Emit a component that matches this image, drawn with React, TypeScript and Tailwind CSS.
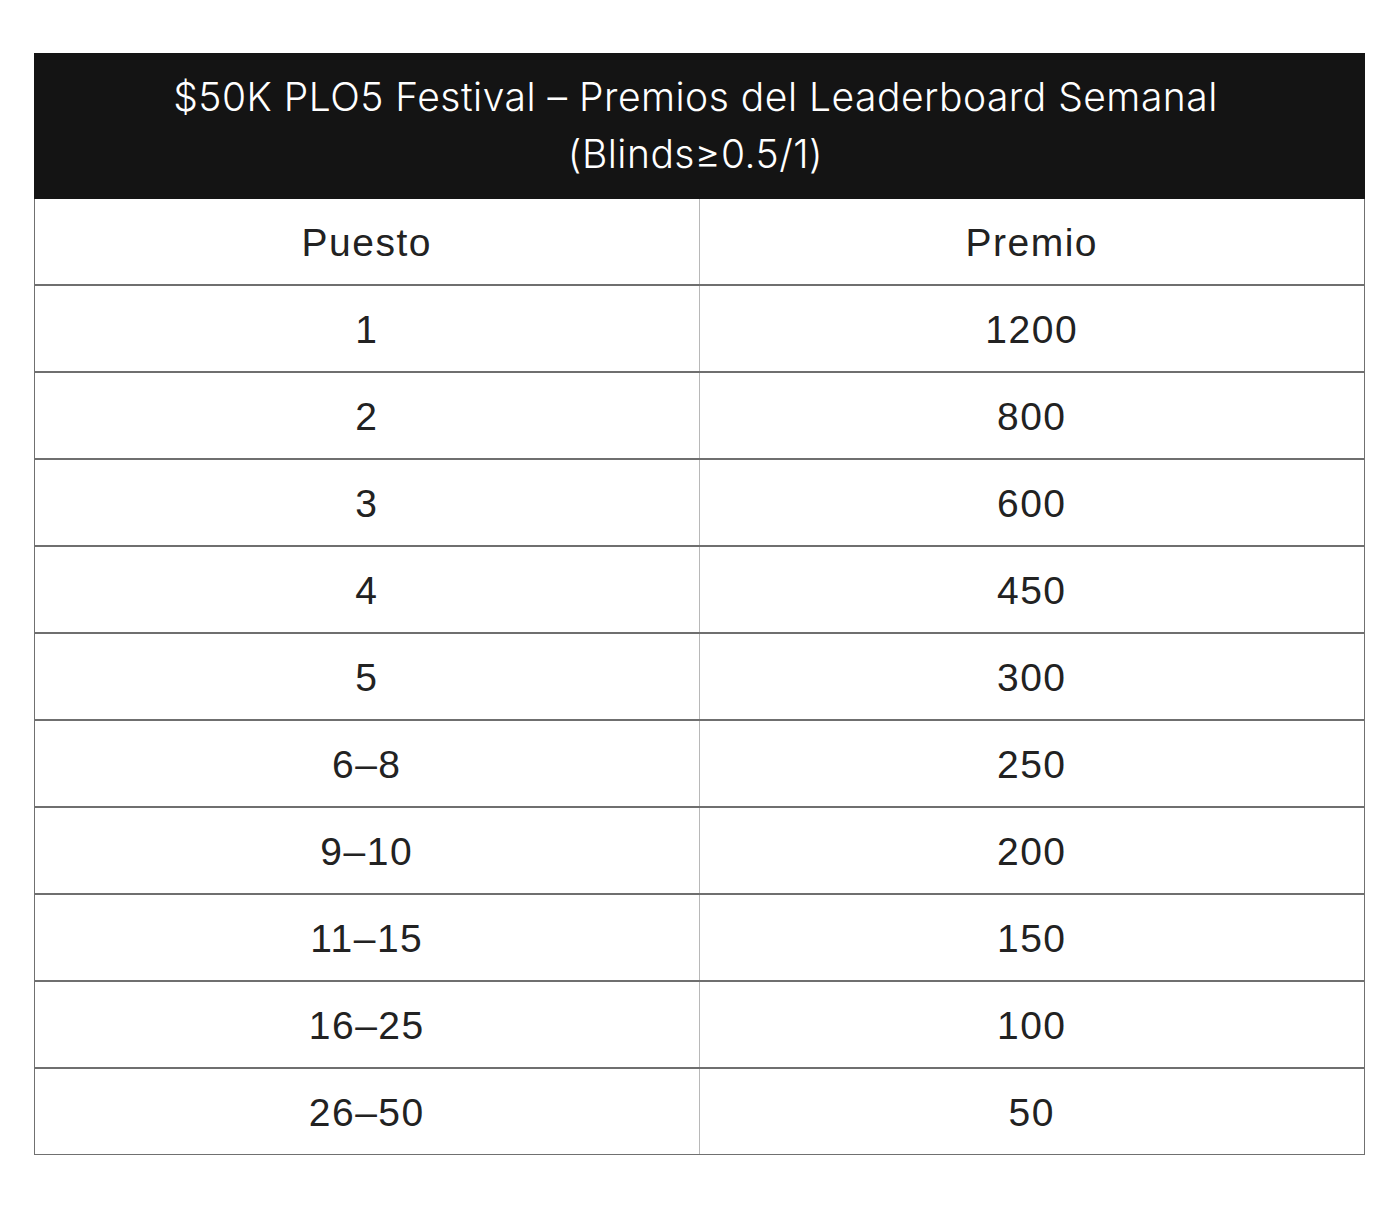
const rows: [string, string][] = [
  ['1', '1200'],
  ['2', '800'],
  ['3', '600'],
  ['4', '450'],
  ['5', '300'],
  ['6–8', '250'],
  ['9–10', '200'],
  ['11–15', '150'],
  ['16–25', '100'],
  ['26–50', '50'],
];

function Row({ left, right, last }: { left: string; right: string; last?: boolean }) {
  return (
    <div className={`grid grid-cols-2 ${last ? '' : 'border-b-2 border-[#6f6f6f]'}`}>
      <div className="h-[85px] pt-1 flex items-center justify-center border-r border-[#b8b8b8]">{left}</div>
      <div className="h-[85px] pt-1 flex items-center justify-center">{right}</div>
    </div>
  );
}

export default function App() {
  return (
    <div className="min-h-[1221px] bg-white pt-[53px] px-[34px]">
      <div className="border border-t-0 border-[#707070] font-['Liberation_Sans',Arial,sans-serif] text-[39px] tracking-[1.5px] text-[#222]">
        <div className="-mx-px bg-[#141414] h-[146px] flex flex-col items-center justify-center text-white font-['Inter','Liberation_Sans',sans-serif] font-light text-[39px] tracking-[0.5px] leading-[57px] pb-[2px] pr-[8px]">
          <span>$50K PLO5 Festival – Premios del Leaderboard Semanal</span>
          <span>(Blinds≥0.5/1)</span>
        </div>
        <Row left="Puesto" right="Premio" />
        {rows.map(([l, r], i) => (
          <Row key={l} left={l} right={r} last={i === rows.length - 1} />
        ))}
      </div>
    </div>
  );
}
